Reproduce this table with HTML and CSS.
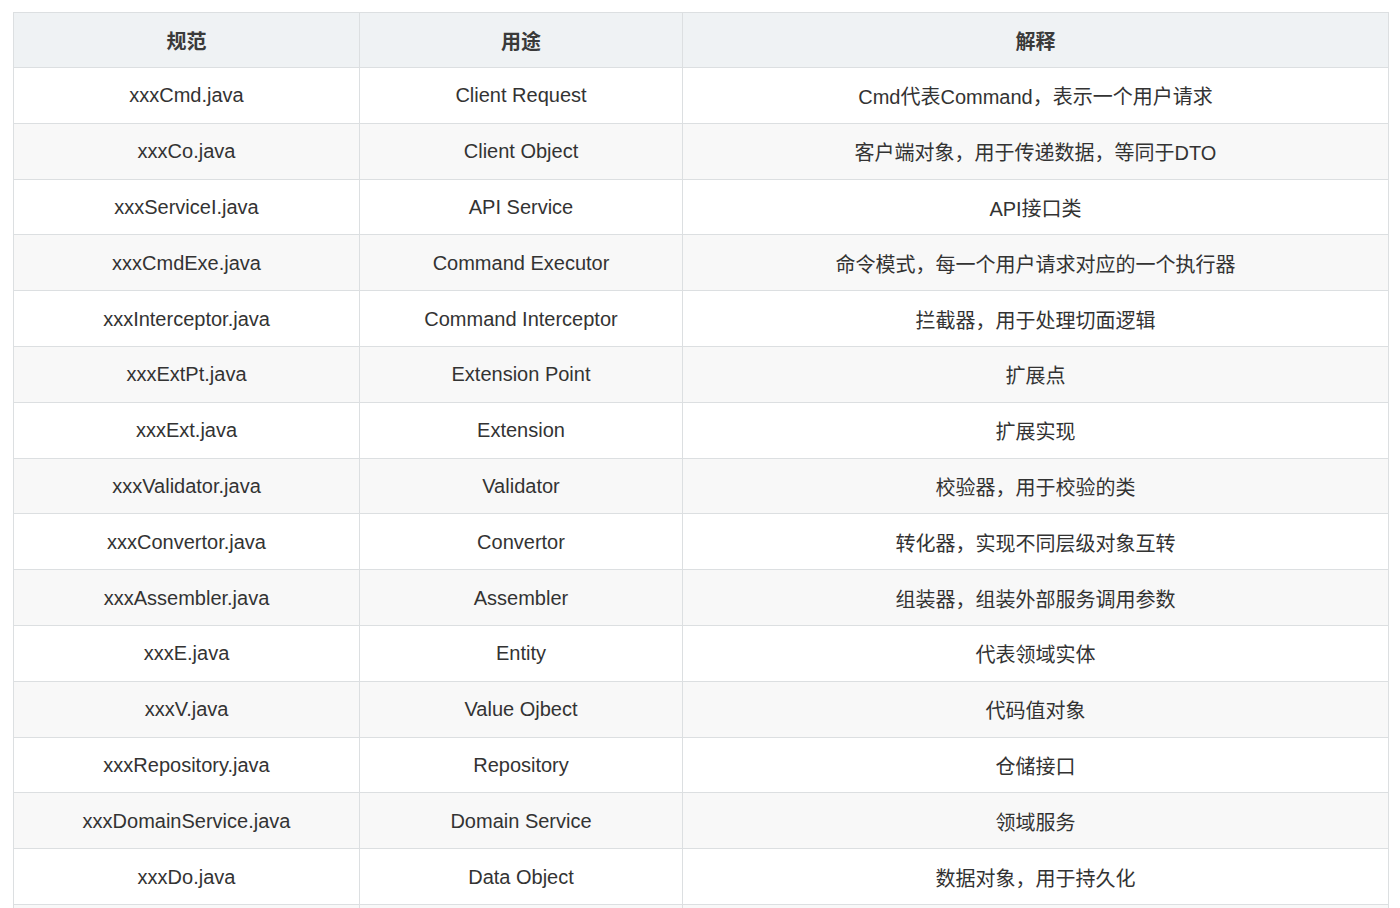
FILE: index.html
```html
<!DOCTYPE html>
<html lang="zh">
<head>
<meta charset="utf-8">
<title>规范</title>
<link rel="stylesheet" href="styles.css">
</head>
<body>
<table class="spec">
  <colgroup>
    <col class="c1">
    <col class="c2">
    <col class="c3">
  </colgroup>
  <thead>
    <tr><th>规范</th><th>用途</th><th>解释</th></tr>
  </thead>
  <tbody>
    <tr><td>xxxCmd.java</td><td>Client Request</td><td>Cmd代表Command，表示一个用户请求</td></tr>
    <tr><td>xxxCo.java</td><td>Client Object</td><td>客户端对象，用于传递数据，等同于DTO</td></tr>
    <tr><td>xxxServiceI.java</td><td>API Service</td><td>API接口类</td></tr>
    <tr><td>xxxCmdExe.java</td><td>Command Executor</td><td>命令模式，每一个用户请求对应的一个执行器</td></tr>
    <tr><td>xxxInterceptor.java</td><td>Command Interceptor</td><td>拦截器，用于处理切面逻辑</td></tr>
    <tr><td>xxxExtPt.java</td><td>Extension Point</td><td>扩展点</td></tr>
    <tr><td>xxxExt.java</td><td>Extension</td><td>扩展实现</td></tr>
    <tr><td>xxxValidator.java</td><td>Validator</td><td>校验器，用于校验的类</td></tr>
    <tr><td>xxxConvertor.java</td><td>Convertor</td><td>转化器，实现不同层级对象互转</td></tr>
    <tr><td>xxxAssembler.java</td><td>Assembler</td><td>组装器，组装外部服务调用参数</td></tr>
    <tr><td>xxxE.java</td><td>Entity</td><td>代表领域实体</td></tr>
    <tr><td>xxxV.java</td><td>Value Ojbect</td><td>代码值对象</td></tr>
    <tr><td>xxxRepository.java</td><td>Repository</td><td>仓储接口</td></tr>
    <tr><td>xxxDomainService.java</td><td>Domain Service</td><td>领域服务</td></tr>
    <tr><td>xxxDo.java</td><td>Data Object</td><td>数据对象，用于持久化</td></tr>
    <tr><td></td><td></td><td></td></tr>
  </tbody>
</table>
</body>
</html>
```

FILE: styles.css
```css
html, body {
  margin: 0;
  padding: 0;
  background: #ffffff;
  overflow: hidden;
}
body {
  padding: 12px 0 0 13px;
  font-family: "Liberation Sans", Arial, "Noto Sans CJK SC", sans-serif;
  color: #333333;
}
.spec {
  border-collapse: collapse;
  table-layout: fixed;
  width: 1375px;
  font-size: 20px;
}
.c1 { width: 346px; }
.c2 { width: 323px; }
.c3 { width: 706px; }
.spec th,
.spec td {
  border: 1px solid #dcdfe1;
  text-align: center;
  vertical-align: middle;
  padding: 1px 0 0 0;
  white-space: nowrap;
  overflow: hidden;
}
.spec th {
  height: 53px;
  background: #eff2f4;
  font-weight: 600;
  color: #3a3a3a;
}
.spec td {
  height: 53.8px;
}
.spec tbody tr:nth-child(even) td {
  background: #f8f8f8;
}
```
